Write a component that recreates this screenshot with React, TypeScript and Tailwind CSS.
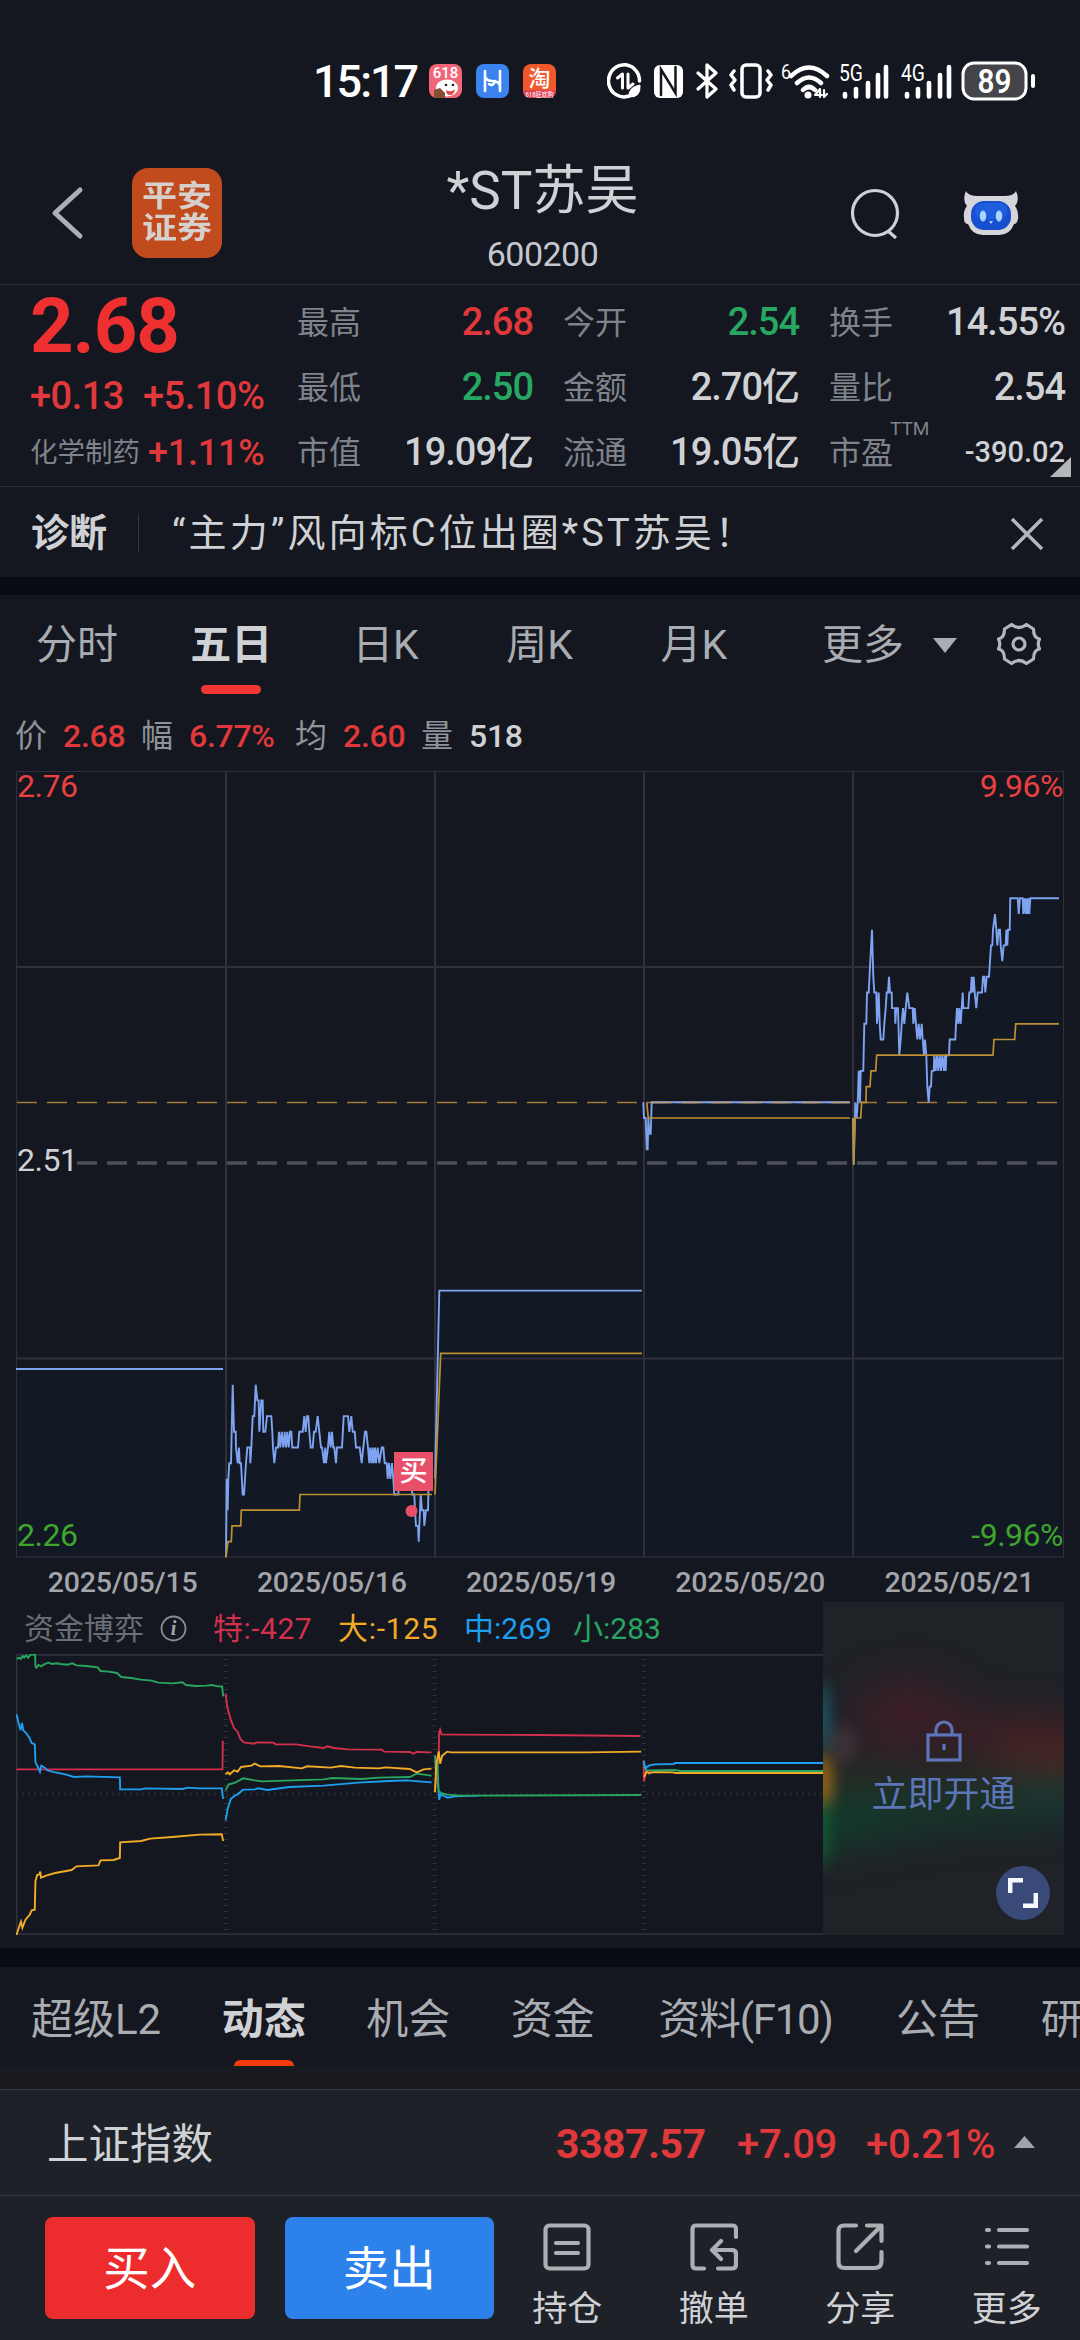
import type { ReactNode } from "react";

const quoteColumns = [
  [
    { label: "最高", value: "2.68", color: "text-[#e0383b]" },
    { label: "最低", value: "2.50", color: "text-[#27a862]" },
    { label: "市值", value: "19.09亿", color: "text-[#cfd1d5]" },
  ],
  [
    { label: "今开", value: "2.54", color: "text-[#27a862]" },
    { label: "金额", value: "2.70亿", color: "text-[#cfd1d5]" },
    { label: "流通", value: "19.05亿", color: "text-[#cfd1d5]" },
  ],
  [
    { label: "换手", value: "14.55%", color: "text-[#cfd1d5]" },
    { label: "量比", value: "2.54", color: "text-[#cfd1d5]" },
    { label: "市盈", value: "-390.02", color: "text-[#cfd1d5]", note: "TTM" },
  ],
];

const periods = ["分时", "五日", "日K", "周K", "月K"];

const days = ["2025/05/15", "2025/05/16", "2025/05/19", "2025/05/20", "2025/05/21"];

const summary = [
  { label: "价", value: "2.68", color: "text-[#e0383b]", width: "w-[126px]" },
  { label: "幅", value: "6.77%", color: "text-[#e0383b]", width: "w-[154px]" },
  { label: "均", value: "2.60", color: "text-[#e0383b]", width: "w-[126px]" },
  { label: "量", value: "518", color: "text-[#cfd1d5]", width: "w-[126px]" },
];

const flows = [
  { text: "特:-427", color: "text-[#d2304c]", width: "w-[125px] tracking-[0.500px]" },
  { text: "大:-125", color: "text-[#f2ab27]", width: "w-[126px] tracking-[0.700px]" },
  { text: "中:269", color: "text-[#1e9ff0]", width: "w-[109px]" },
  { text: "小:283", color: "text-[#29a562]", width: "w-[100px]" },
];

const sections = ["超级L2", "动态", "机会", "资金", "资料(F10)", "公告", "研报"];

// Each point is "x,tick": x in thirds of a pixel from the day's origin, tick in cents above 2.26
const priceLines = [
  { x0: 16, points: "0,12 621,12" },
  {
    x0: 200,
    points:
      "78,0 80,5 83,3 85,5 88,6 93,6 98,11 102,8 107,8 108,7 113,6 117,7 119,6 123,6 128,4 132,4 138,6 142,7 150,7 151,6 154,7 158,9 163,9 167,11 172,10 176,10 178,8 184,10 188,10 190,8 196,8 201,9 214,9 217,8 219,7 223,6 228,7 234,7 237,8 241,7 245,8 250,7 254,8 258,7 262,8 266,7 270,8 274,8 277,7 294,7 298,8 308,8 313,9 317,8 321,9 325,9 328,8 332,7 338,7 342,8 347,8 353,9 358,8 363,7 366,7 372,6 376,7 378,6 384,7 388,8 392,7 396,8 400,7 403,7 408,6 411,7 426,7 431,9 444,9 448,8 454,9 458,8 464,8 468,7 479,7 485,6 490,7 495,8 499,8 504,7 508,6 511,7 515,6 518,7 521,6 525,7 528,6 533,7 538,6 545,7 550,7 554,6 560,6 563,5 567,6 571,5 576,6 580,5 583,4 595,4 598,5 634,5 637,4 643,4 645,3 648,2 654,2 656,1 662,4 666,3 671,3 673,2 678,3 684,3 686,5 695,5",
  },
  { x0: 435, points: "0,5 13,17 621,17" },
  { x0: 630, points: "40,29 42,28 47,28 50,26 53,26 55,28 58,27 62,27 65,29 660,29" },
  {
    x0: 630,
    points:
      "669,28 671,25 675,28 676,29 680,28 683,29 686,31 690,29 692,31 700,31 703,34 709,34 711,36 716,36 721,38 726,40 730,37 733,36 739,36 741,34 746,36 749,34 752,33 760,33 763,34 767,35 770,36 774,36 777,37 780,36 785,36 786,35 795,35 796,34 799,35 804,35 808,32 812,33 815,34 819,35 823,34 827,35 832,36 838,35 848,35 850,34 854,35 858,34 862,33 866,34 870,33 875,34 878,33 882,32 885,33 889,32 892,30 896,29 899,30 903,30 905,31 911,31 913,32 917,31 921,32 925,31 929,32 933,31 937,32 942,31 945,32 947,31 949,32 957,32 959,33 976,33 978,34 981,35 985,34 988,35 992,34 995,35 998,36 1000,35 1015,35 1018,36 1022,36 1025,37 1028,36 1031,37 1034,36 1039,35 1043,36 1056,36 1059,37 1063,37 1066,36 1070,37 1077,37 1080,38 1083,39 1087,39 1089,40 1095,41 1099,40 1102,39 1106,40 1110,40 1112,39 1117,38 1121,39 1127,39 1129,40 1132,39 1134,40 1139,40 1141,42 1163,42 1166,41 1170,42 1178,42 1180,41 1184,42 1187,41 1190,42 1193,41 1196,42 1198,41 1201,42 1287,42",
  },
];

const averageLines = [
  { x0: 200, points: "78,0 84,1 94,1 96,2 122,2 124,3 298,3 300,4 696,4" },
  { x0: 435, points: "0,4 17,13 621,13" },
  { x0: 630, points: "50,29 55,28 660,28" },
  {
    x0: 630,
    points:
      "669,28 671,25 675,28 692,28 695,29 708,29 709,30 720,30 723,31 737,31 740,32 1089,32 1092,33 1154,33 1157,34 1287,34",
  },
];

const flowLines = [
  { color: "#d2304c", points: "48,627 646,627 647,541" },
  { color: "#29a562", points: "48,296 56,292 60,296 66,287 70,292 76,285 82,292 88,283 102,283 103,318 106,322 112,314 120,318 128,312 140,307 152,311 164,309 176,311 196,313 210,309 222,315 250,317 284,321 292,332 316,334 340,338 352,350 380,353 410,358 440,361 460,367 500,369 530,366 540,374 570,377 600,376 616,374 632,378 645,378 648,408" },
  { color: "#1e9ff0", points: "48,462 54,488 60,510 64,488 68,510 76,518 84,530 92,548 101,552 103,606 110,620 116,634 120,616 130,622 138,630 160,636 190,642 215,650 250,648 348,651 349,687 410,687 420,684 530,686 545,682 580,684 644,684 648,716" },
  { color: "#f2ab27", points: "48,1124 54,1104 61,1084 65,1102 74,1078 86,1064 92,1050 101,1048 103,962 108,944 114,942 117,934 119,952 134,946 160,938 208,929 222,918 286,915 292,900 330,899 348,893 349,846 410,842 436,835 500,830 580,823 644,822 648,842" },
  { color: "#d2304c", points: "655,400 660,440 670,478 680,504 690,514 698,536 708,546 738,550 744,546 794,547 800,552 860,552 900,558 940,563 950,558 970,563 1010,567 1108,568 1116,574 1190,575 1200,580 1210,575 1253,576" },
  { color: "#f2ab27", points: "655,642 662,636 667,642 680,630 690,634 700,620 730,616 740,610 756,618 810,617 876,624 892,618 960,622 990,617 1030,622 1100,624 1120,621 1190,626 1210,636 1230,627 1253,625" },
  { color: "#29a562", points: "655,690 664,672 680,668 706,654 740,660 760,663 850,660 940,657 965,653 1050,656 1100,652 1190,650 1210,640 1253,646" },
  { color: "#1e9ff0", points: "655,780 661,746 670,716 684,704 690,702 706,688 740,687 750,684 776,689 840,680 940,676 1040,667 1130,662 1180,660 1253,666" },
  { color: "#d2304c", points: "1263,690 1270,620 1274,580 1275,516 1278,508 1282,522 1320,523 1568,524 1860,527" },
  { color: "#1e9ff0", points: "1265,600 1270,630 1275,718 1280,702 1300,712 1320,708 1390,706" },
  { color: "#29a562", points: "1263,586 1266,640 1270,600 1273,690 1280,698 1300,703 1340,706 1862,704" },
  { color: "#f2ab27", points: "1263,696 1267,610 1274,573 1278,610 1284,586 1298,574 1310,576 1700,576 1862,574" },
  { color: "#d2304c", points: "1869,600 1870,664 1876,630 1884,640 1890,632" },
  { color: "#f2ab27", points: "1870,650 1878,634 1886,638 1900,635 1957,636 1960,638 2390,638" },
  { color: "#29a562", points: "1870,612 1876,630 1960,629 1975,632 2390,632" },
  { color: "#1e9ff0", points: "1869,602 1874,624 1884,616 1900,612 1957,611 1960,608 2390,608" },
];

function toPoints(x0: number, points: string) {
  return points
    .split(" ")
    .map((pair) => {
      const [x, tick] = pair.split(",").map(Number);
      return `${(x0 + x / 3).toFixed(1)},${(1557.3 - tick * 15.69).toFixed(1)}`;
    })
    .join(" ");
}

function StatusBar() {
  return (
    <div className="flex h-[120px] items-center pt-[42px] pl-[313px] text-white">
      <span className="w-[116px] text-[45px] leading-none font-medium tracking-[-2px]">15:17</span>
      <svg className="h-[34px] w-[128px]" viewBox="0 0 128 34">
        <rect x="0" y="0" width="33" height="34" rx="8" fill="#f2667a" />
        <text x="16.500" y="14" textAnchor="middle" fontSize="15" fontWeight="500" fill="#fff">618</text>
        <ellipse cx="18" cy="24" rx="11" ry="8.500" fill="#fff" />
        <path d="M5 33v-7l6-2 5 5v5H9q-2 0-4-1z" fill="#80502f" />
        <path d="M17 26q5 3 9-1-1 6-5 6t-4-5" fill="#e0474f" />
        <circle cx="17" cy="21" r="1.300" fill="#222" />
        <circle cx="24" cy="21" r="1.300" fill="#222" />
        <rect x="47" y="0" width="33" height="34" rx="8" fill="#3a83f0" />
        <path d="M56 7v20M71 7v20M56 12q1 5 7.500 5t7.500 5M60 20q4 3 6-3" fill="none" stroke="#fff" strokeWidth="2.600" strokeLinecap="round" />
        <rect x="94" y="0" width="33" height="34" rx="8" fill="#f0572b" />
        <path d="M94 26h33q0 8-8 8h-17q-8 0-8-8z" fill="#e04358" />
        <text x="110.500" y="22" textAnchor="middle" fontSize="22" fontWeight="500" fill="#fff">淘</text>
        <text x="110.500" y="32.500" textAnchor="middle" fontSize="7" textLength="28" lengthAdjust="spacingAndGlyphs" fill="#fff">618狂欢购</text>
      </svg>
      <svg className="ml-[50px] h-[40px] w-[435px] shrink-0" viewBox="0 0 435 40" fill="none" stroke="#fff" strokeWidth="3.500" strokeLinecap="round" strokeLinejoin="round">
        <path d="M22 35A15.500 16 0 1 1 32.500 20" />
        <path d="M10.500 17l5-4v14M21 13v14l5-4" strokeWidth="3" />
        <path d="M22 36q-1-10 11-12 1 13-11 12z" fill="#fff" strokeWidth="1" />
        <rect x="47" y="4" width="29" height="33" rx="6" fill="#fff" stroke="none" />
        <path d="M54 34V8.500L68.500 32V6" stroke="#14171f" strokeWidth="2.500" strokeLinejoin="miter" />
        <path d="M91 12l18 16-9 8V4l9 8-18 16" strokeWidth="3.300" />
        <rect x="135" y="4" width="18" height="32" rx="4" />
        <path d="M127 10l-3 4 4 5-4 5 3 5M161 10l3 4-4 5 4 5-3 5" />
        <path d="M184 15q18-17 36 0M190 22q12-11 24 0M196 29q6-6 12 0" strokeWidth="4.500" />
        <circle cx="201" cy="34" r="3.500" fill="#fff" stroke="none" />
        <path d="M213 36v-8l-5 6h7M217 29v7l3-3" strokeWidth="2.200" />
        <path d="M238 33v2.500M249 28v7.500M261 22v13.500M271 14v21.500M279 6v29.500M300 33v2.500M311 28v7.500M322 22v13.500M333 14v21.500M342 6v29.500" strokeWidth="4.600" />
        <rect x="356" y="2" width="63" height="36" rx="11" fill="#43454a" strokeWidth="3" />
        <path d="M426 15v10" strokeWidth="4" />
        <g fill="#fff" stroke="none">
          <text x="174" y="18" fontSize="20" textLength="10" lengthAdjust="spacingAndGlyphs">6</text>
          <text x="232" y="20" fontSize="23" textLength="24" lengthAdjust="spacingAndGlyphs">5G</text>
          <text x="294" y="20" fontSize="23" textLength="24" lengthAdjust="spacingAndGlyphs">4G</text>
          <text x="387.500" y="32" textAnchor="middle" fontSize="34" fontWeight="600" textLength="34" lengthAdjust="spacingAndGlyphs">89</text>
        </g>
      </svg>
    </div>
  );
}

function Header() {
  return (
    <header className="flex h-[165px] border-b border-[#2b2e38]">
      <div className="flex h-[186px] w-[300px] shrink-0 items-center pl-[50px]">
        <svg className="h-[54px] w-[34px]" viewBox="0 0 34 54" fill="none" stroke="#adb0b2" strokeWidth="5" strokeLinecap="round" strokeLinejoin="round">
          <path d="M30 4L5 27l25 23" />
        </svg>
        <div className="ml-[48px] flex h-[90px] w-[90px] flex-col items-center justify-center rounded-[16px] bg-[#c24b1e] text-[35px] leading-none font-bold text-[#d6d0cd]">
          <span className="h-[32px] scale-y-[0.860] leading-[32px]">平安</span>
          <span className="h-[32px] scale-y-[0.860] leading-[32px]">证券</span>
        </div>
      </div>
      <div className="flex w-[485px] flex-col items-center pt-[43px] text-[#cfd1d5]">
        <h1 className="text-[53px] leading-[56px]">*ST苏吴</h1>
        <span className="mt-[15px] text-[34px] leading-[40px] tracking-[-0.500px] text-[#c5c7d0]">600200</span>
      </div>
      <div className="flex h-[186px] flex-1 items-center pl-[66px]">
        <svg className="h-[52px] w-[52px]" viewBox="0 0 52 52" fill="none" stroke="#cdd0d8" strokeWidth="3.200">
          <circle cx="24" cy="26" r="22.500" />
          <path d="M37 44l8 7" />
        </svg>
        <svg className="ml-[60px] h-[46px] w-[56px]" viewBox="0 0 56 46">
          <path d="M3 1q2 5 12 5h26q10 0 12-5 4 9-1 15 4 5 3 13-1 5-4 5-4 11-15 11H20Q9 45 5 34q-4 0-4-6-1-7 3-12-5-6-1-15z" fill="#d6d6da" />
          <rect x="8" y="11" width="40" height="29" rx="13" fill="#174fd0" />
          <rect x="12" y="13" width="32" height="16" rx="8" fill="#2a6bea" opacity="0.500" />
          <ellipse cx="20" cy="26" rx="3.200" ry="5.500" fill="#a9d4fb" />
          <ellipse cx="36" cy="26" rx="3.200" ry="5.500" fill="#a9d4fb" />
          <path d="M26 31h4l-2 3z" fill="#a9d4fb" />
        </svg>
      </div>
    </header>
  );
}

function Quote() {
  return (
    <section className="relative flex h-[202px] border-b border-[#2b2e38]">
      <div className="w-[297px] shrink-0 pl-[30px] text-[#e0383b]">
        <div className="h-[81px] pt-px text-[76px] leading-[80px] font-bold tracking-[-1px] text-[#ef3031]">2.68</div>
        <div className="flex h-[61px] items-center gap-[19px] text-[38px] font-medium tracking-[-0.500px]">
          <span>+0.13</span>
          <span>+5.10%</span>
        </div>
        <div className="flex h-[52px] items-center gap-[8px]">
          <span className="text-[27.500px] whitespace-nowrap text-[#7f838b]">化学制药</span>
          <span className="text-[36px] font-medium tracking-[-0.200px]">+1.11%</span>
        </div>
      </div>
      <div className="flex gap-[30px] pt-[5px]">
        {quoteColumns.map((column, index) => (
          <div key={index} className="w-[236px]">
            {column.map((item) => (
              <div key={item.label} className="flex h-[65px] items-center justify-between">
                <span className="relative text-[32px] text-[#7f838b]">
                  {item.label}
                  {item.note && <span className="absolute -top-[10px] left-[61px] text-[19px] leading-none">{item.note}</span>}
                </span>
                <span className={`${item.note ? "text-[29px]" : "text-[38px] tracking-[-1px]"} font-medium ${item.color}`}>
                  {item.value}
                </span>
              </div>
            ))}
          </div>
        ))}
      </div>
      <svg className="absolute right-[9px] bottom-[9px] h-[20px] w-[21px]" viewBox="0 0 21 20">
        <path d="M21 0v20H0z" fill="#b4b6ba" />
      </svg>
    </section>
  );
}

function Diagnosis() {
  return (
    <section className="flex h-[90px] items-center pt-[3px] pr-[36px] pl-[31px] text-[#cfd1d5]">
      <span className="text-[38px] font-bold">诊断</span>
      <span className="mr-[33px] ml-[31px] h-[39px] w-px bg-[#343742]" />
      <span className="flex-1 text-[38px] tracking-[3.100px] whitespace-nowrap">“主力”风向标C位出圈*ST苏吴！</span>
      <svg className="h-[34px] w-[34px]" viewBox="0 0 34 34" stroke="#b4b6ba" strokeWidth="3.500">
        <path d="M2 2l30 30M32 2L2 32" />
      </svg>
    </section>
  );
}

function PeriodTabs() {
  return (
    <nav className="flex h-[99px] pt-[3px] text-[41px] text-[#a9acb1]">
      <div className="grid w-[771px] grid-cols-5">
        {periods.map((period) => (
          <div key={period} className="relative flex items-center justify-center">
            <span className={period === "五日" ? "font-bold text-[#cfd1d5]" : ""}>{period}</span>
            {period === "五日" && <span className="absolute bottom-0 left-[47px] h-[9px] w-[60px] rounded-full bg-[#ee3634]" />}
          </div>
        ))}
      </div>
      <div className="ml-[51px] flex items-center">
        <span>更多</span>
        <svg className="mb-[2px] ml-[29px] h-[15px] w-[24px]" viewBox="0 0 24 15">
          <path d="M0 0h24L12 15z" fill="#a9acb1" />
        </svg>
        <svg className="mb-[4px] ml-[40px] h-[44px] w-[44px]" viewBox="0 0 44 44" fill="none" stroke="#b4b6ba" strokeWidth="3.200" strokeLinejoin="round">
          <path d="M14.500 2.500q7.500 6 15 0l7 4.500q0 9 6 10-2.500 5 0 10-6 1-6 10l-7 4.500q-7.500-6-15 0l-7-4.500q0-9-6-10 2.500-5 0-10 6-1 6-10z" />
          <circle cx="22" cy="22" r="6" />
        </svg>
      </div>
    </nav>
  );
}

function ChartLabel({ className, children }: { className: string; children: ReactNode }) {
  return <span className={`absolute text-[32px] leading-none tracking-[-0.500px] ${className}`}>{children}</span>;
}

function PriceChart() {
  return (
    <div className="relative mx-[16px] h-[787px]">
      <svg className="h-[787px] w-[1048px]" viewBox="16 771 1048 787" fill="none">
        {priceLines.map((line, index) => {
          const points = toPoints(line.x0, line.points);
          const first = points.slice(0, points.indexOf(","));
          const last = points.slice(points.lastIndexOf(" ") + 1).split(",")[0];
          return <polygon key={index} points={`${first},1557 ${points} ${last},1557`} fill="#0b2a48" fillOpacity="0.120" />;
        })}
        <path d="M16 967H1064M16 1358.500H1064M226 771V1557M435 771V1557M644 771V1557M853 771V1557" stroke="#2e313b" strokeWidth="2" />
        <rect x="16.500" y="771.500" width="1047" height="785.500" stroke="#2e313b" strokeWidth="1.200" />
        <path d="M17 1163H1060" stroke="#4d5059" strokeWidth="3.500" strokeDasharray="20 10" />
        <path d="M17 1102.500H1060" stroke="#a37d38" strokeWidth="1.500" strokeDasharray="20 10" />
        {priceLines.map((line, index) => (
          <polyline key={index} points={toPoints(line.x0, line.points)} stroke="#7ea3f0" strokeWidth="1.900" />
        ))}
        {averageLines.map((line, index) => (
          <polyline key={index} points={toPoints(line.x0, line.points)} stroke="#bd8f33" strokeWidth="1.700" />
        ))}
        <path d="M652 1102.500H850" stroke="#bd9b78" strokeWidth="1.700" strokeDasharray="20 10" />
        <circle cx="411.500" cy="1511" r="6" fill="#e8506a" />
      </svg>
      <ChartLabel className="top-[-1px] left-[1px] text-[#e8413f]">2.76</ChartLabel>
      <ChartLabel className="top-[-1px] right-[1px] text-[#e8413f]">9.96%</ChartLabel>
      <ChartLabel className="top-[373px] left-[1px] bg-[#14171f] text-[#cfd1d5]">2.51</ChartLabel>
      <ChartLabel className="bottom-[7px] left-[1px] text-[#3fa52d]">2.26</ChartLabel>
      <ChartLabel className="right-[1px] bottom-[7px] text-[#3fa52d]">-9.96%</ChartLabel>
      <span className="absolute top-[681px] left-[378px] flex h-[39px] w-[39px] items-center justify-center bg-[#e8506a] text-[28px] leading-none font-medium text-white">
        买
      </span>
    </div>
  );
}

function FlowChart() {
  return (
    <div className="relative px-[16px]">
      <div className="flex h-[52px] items-center pt-[2px] pl-[8px] text-[30px] leading-none whitespace-nowrap">
        <span className="w-[136px] text-[30px] text-[#6b6e76]">资金博弈</span>
        <svg className="mb-[2px] h-[27px] w-[53px]" viewBox="0 0 53 27">
          <circle cx="13.500" cy="13.500" r="12" fill="none" stroke="#8b8e95" strokeWidth="1.800" />
          <text x="13.500" y="20" textAnchor="middle" fontSize="20" fontStyle="italic" fontWeight="700" fontFamily="Liberation Serif" fill="#a4a7ac">i</text>
        </svg>
        {flows.map((flow) => (
          <span key={flow.text} className={`${flow.width} ${flow.color}`}>
            {flow.text}
          </span>
        ))}
      </div>
      <svg className="h-[281px] w-[1048px]" viewBox="46.500 281 3043 843" preserveAspectRatio="none" fill="none">
        <path d="M48 283H3088V1122H48z" stroke="#2e313b" strokeWidth="2" vectorEffect="non-scaling-stroke" />
        <path d="M48 702H2390" stroke="#30333d" strokeWidth="4" strokeDasharray="1 5" vectorEffect="non-scaling-stroke" />
        <path d="M656 296V1112M1262 296V1112M1870 296V1112" stroke="#30333d" strokeWidth="4" strokeDasharray="1 5" vectorEffect="non-scaling-stroke" />
        {flowLines.map((line, index) => (
          <polyline key={index} points={line.points} stroke={line.color} strokeWidth="1.900" vectorEffect="non-scaling-stroke" />
        ))}
      </svg>
      <div className="absolute top-0 left-[823px] flex h-[333px] w-[241px] flex-col items-center overflow-hidden bg-[#1f2227] pt-[118px] text-[#5c74b8]">
        <svg className="absolute inset-0 h-[333px] w-[241px]" viewBox="0 0 241 333">
          <defs>
            <filter id="haze" x="-50%" y="-50%" width="200%" height="200%" colorInterpolationFilters="sRGB">
              <feGaussianBlur stdDeviation="20" />
            </filter>
            <filter id="edge" x="-400%" y="-50%" width="900%" height="200%" colorInterpolationFilters="sRGB">
              <feGaussianBlur stdDeviation="7" />
            </filter>
          </defs>
          <g filter="url(#haze)">
            <path d="M30 100L60 80 110 78 150 110 270 120V165L120 145 40 145z" fill="#5a1a28" opacity="0.500" />
            <path d="M170 130L280 135V175L180 165z" fill="#6b2e1c" opacity="0.400" />
            <path d="M-20 165L280 165V185H-20z" fill="#5a5014" opacity="0.250" />
            <path d="M-40 190L120 195 280 190V210L115 225 -40 255z" fill="#0a4a30" opacity="0.650" />
            <ellipse cx="220" cy="195" rx="20" ry="18" fill="#0d4f63" opacity="0.400" />
          </g>
          <g filter="url(#edge)">
            <ellipse cx="0" cy="115" rx="6" ry="36" fill="#1a7a8c" opacity="0.700" />
            <ellipse cx="20" cy="142" rx="14" ry="20" fill="#7a5566" opacity="0.280" />
            <ellipse cx="0" cy="180" rx="10" ry="28" fill="#a06818" opacity="0.900" />
            <ellipse cx="0" cy="230" rx="5" ry="36" fill="#127a3c" opacity="0.700" />
          </g>
        </svg>
        <svg className="relative h-[42px] w-[36px]" viewBox="0 0 36 42" fill="none" stroke="#5c74b8" strokeWidth="3.200">
          <rect x="2" y="15" width="32" height="25" />
          <path d="M10 15V10a8 8 0 0 1 16 0v5M18 24v6" />
        </svg>
        <span className="relative mt-[8px] text-[36px] leading-[50px]">立即开通</span>
        <span className="absolute right-[14px] bottom-[15px] flex h-[54px] w-[54px] items-center justify-center rounded-full bg-[#3a4a78]">
          <svg className="h-[30px] w-[30px]" viewBox="0 0 30 30" fill="none" stroke="#f5f8ff" strokeWidth="4.500">
            <path d="M15 2.200H2.200V15M15 27.800h12.800V15" />
          </svg>
        </span>
      </div>
    </div>
  );
}

function SectionTabs() {
  return (
    <nav className="flex h-[99px] gap-[60.500px] overflow-hidden pl-[31px] text-[42px] whitespace-nowrap text-[#a9acb1]">
      {sections.map((section) => (
        <div key={section} className="relative flex shrink-0 items-center pt-[5px]">
          <span
            className={
              section === "动态" ? "font-bold text-[#cfd1d5]" : section.endsWith("(F10)") ? "mx-[3px] tracking-[-1.300px]" : ""
            }
          >
            {section}
          </span>
          {section === "动态" && <span className="absolute bottom-0 left-[12px] h-[6px] w-[60px] rounded-t-[6px] bg-[#f53c0c]" />}
        </div>
      ))}
    </nav>
  );
}

function IndexBar() {
  return (
    <div className="flex h-[107px] items-center border-y border-[#35383f] pt-[5px] pl-[47px] text-[40px] font-medium tracking-[-0.300px] text-[#e0383b]">
      <span className="w-[509px] text-[41.500px] font-normal tracking-normal text-[#cfd1d5]">上证指数</span>
      <span className="w-[181px] text-[41px] font-bold tracking-[-0.500px]">3387.57</span>
      <span className="w-[129px]">+7.09</span>
      <span className="w-[148px]">+0.21%</span>
      <svg className="mb-[6px] h-[12px] w-[21px]" viewBox="0 0 21 12">
        <path d="M10.500 0L21 12H0z" fill="#a0a3a8" />
      </svg>
    </div>
  );
}

const actions = [
  {
    label: "持仓",
    icon: (
      <>
        <rect x="2.500" y="2.500" width="43" height="43" rx="4" />
        <path d="M13 20h22M13 30h22" />
      </>
    ),
  },
  { label: "撤单", icon: <path d="M46 14V6q0-3.500-3.500-3.500H6Q2.500 2.500 2.500 6v36q0 3.500 3.500 3.500h8M28 45.500h14q4 0 4-4V31q0-4-4-4H22M31 18l-9 9 9 9" /> },
  { label: "分享", icon: <path d="M20 2.500H8Q2.500 2.500 2.500 8v31q0 6 6 6h30q7 0 7-7V29M31 2.500h14.500V18M45 3L20 28" /> },
  { label: "更多", icon: <path d="M4 7h2M4 23.500h2M4 40h2M16 7h28M16 23.500h28M16 40h28" /> },
];

function Toolbar() {
  return (
    <footer className="flex h-[144px] pl-[45px]">
      <button className="mt-[21px] h-[102px] w-[210px] rounded-[8px] bg-[#ed2c2e] pt-[3px] text-[46.500px] leading-none text-white">买入</button>
      <button className="mt-[21px] ml-[30px] h-[102px] w-[210px] rounded-[8px] bg-[#2c82ea] pt-[3px] text-[46.500px] leading-none text-white">卖出</button>
      <div className="flex pt-[27px]">
        {actions.map((action) => (
          <div key={action.label} className="flex w-[146.500px] flex-col items-center">
            <svg className="h-[48px] w-[48px]" viewBox="0 0 48 48" fill="none" stroke="#adafb4" strokeWidth="4.200" strokeLinecap="round" strokeLinejoin="round">
              {action.icon}
            </svg>
            <span className="mt-[19px] text-[35px] leading-[40px] text-[#cfd1d5]">{action.label}</span>
          </div>
        ))}
      </div>
    </footer>
  );
}

export default function App() {
  return (
    <div className="h-[2340px] w-[1080px] overflow-hidden bg-[#14171f] font-[Roboto,'Noto_Sans_CJK_SC',sans-serif]">
      <StatusBar />
      <Header />
      <Quote />
      <Diagnosis />
      <div className="h-[18px] bg-[#090b14]" />
      <PeriodTabs />
      <div className="flex h-[77px] items-center pt-[6px] pl-[15px] text-[32px]">
        {summary.map((item) => (
          <div key={item.label} className={`flex items-center gap-[16px] ${item.width}`}>
            <span className="text-[#8f9298]">{item.label}</span>
            <span className={`font-medium tracking-[-0.300px] ${item.color}`}>{item.value}</span>
          </div>
        ))}
      </div>
      <PriceChart />
      <div className="mx-[16px] grid h-[44px] grid-cols-5 items-center pt-[4px] pl-[2px] text-center text-[28.500px] font-medium tracking-[-0.200px] text-[#a3a5aa]">
        {days.map((day) => (
          <span key={day}>{day}</span>
        ))}
      </div>
      <FlowChart />
      <div className="mt-[13px] h-[19px] bg-[#090b14]" />
      <SectionTabs />
      <div className="h-[23px] bg-[#1a1b21]" />
      <div className="bg-[#1e2128]">
        <IndexBar />
        <Toolbar />
      </div>
    </div>
  );
}
